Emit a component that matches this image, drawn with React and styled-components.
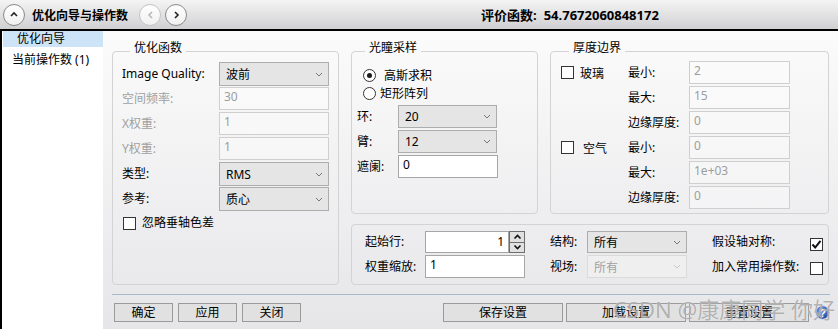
import React from 'react';
import styled, { createGlobalStyle } from 'styled-components';

const GlobalStyle = createGlobalStyle`
  html, body { margin: 0; padding: 0; }
  body {
    font-family: "Noto Sans", "Noto Sans CJK SC", sans-serif;
    font-size: 12px;
    color: #000;
    background: #fff;
  }
  * { box-sizing: border-box; }
`;

const Window = styled.div`
  position: relative;
  width: 838px;
  height: 329px;
  overflow: hidden;
  display: flex;
  flex-direction: column;
`;

const TitleBar = styled.div`
  flex: none;
  height: 31px;
  display: flex;
  align-items: center;
  padding-left: 3px;
  background: linear-gradient(#f4f4f4, #d0d0d3);
  border-bottom: 2px solid #000;
`;

const RoundButton = styled.div`
  width: 22px;
  height: 22px;
  border-radius: 50%;
  background: linear-gradient(#ffffff, #f0f0f0);
  border: 1px solid ${(p) => (p.$dim ? '#c4c4c4' : '#8a8a8a')};
  display: flex;
  align-items: center;
  justify-content: center;
  margin-left: ${(p) => p.$ml || 0}px;
  flex: none;
`;

const TitleText = styled.div`
  font-weight: bold;
  font-size: 12px;
  margin-left: 7px;
  margin-right: 11px;
  white-space: nowrap;
`;

const ScoreLabel = styled.div`
  font-weight: bold;
  font-size: 13px;
  margin-left: ${(p) => p.$ml || 0}px;
  white-space: nowrap;
`;

const Body = styled.div`
  flex: 1;
  display: flex;
  min-height: 0;
`;

const Sidebar = styled.div`
  flex: none;
  width: 103px;
  background: #fff;
  border-left: 2px solid #000;
`;

const NavItem = styled.div`
  height: 16px;
  line-height: 16px;
  margin-left: 1px;
  margin-top: ${(p) => p.$mt || 0}px;
  padding-left: ${(p) => p.$indent}px;
  background: ${(p) => (p.$selected ? '#cde4f8' : 'transparent')};
  white-space: nowrap;
`;

const Main = styled.div`
  flex: 1;
  display: flex;
  flex-direction: column;
  padding: 10px 8px 0 9px;
  background: linear-gradient(#fbfbfb, #e6e6e9);
`;

const Groups = styled.div`
  display: grid;
  grid-template-columns: 227px 187px 279px;
  grid-template-rows: 173px 61px;
  column-gap: 12px;
  row-gap: 10px;
`;

const Group = styled.fieldset`
  margin: 0;
  min-width: 0;
  border: 1px solid #d3d3d3;
  border-radius: 4px;
  padding: ${(p) => p.$pad};
  grid-column: ${(p) => p.$col};
  grid-row: ${(p) => p.$row};
`;

const Legend = styled.legend`
  margin-left: 8px;
  padding: 0 4px 6px;
  line-height: 14px;
  font-size: 12px;
`;

const FormRow = styled.div`
  display: grid;
  grid-template-columns: ${(p) => p.$cols};
  height: ${(p) => p.$h || 25}px;
  align-items: start;
`;

const Label = styled.div`
  line-height: ${(p) => p.$lh || 23}px;
  color: ${(p) => (p.$disabled ? '#a0a0a0' : '#000')};
  white-space: nowrap;
  grid-column: ${(p) => p.$col || 'auto'};
  grid-row: ${(p) => p.$row || 'auto'};
`;

const SelectBox = styled.div`
  width: ${(p) => p.$w}px;
  height: ${(p) => p.$h || 24}px;
  display: flex;
  align-items: center;
  justify-content: space-between;
  padding: 0 5px 0 6px;
  border: 1px solid ${(p) => (p.$disabled ? '#dadada' : '#adadad')};
  background: ${(p) => (p.$disabled ? '#efeff0' : '#e5e5e5')};
  color: ${(p) => (p.$disabled ? '#a0a0a0' : '#000')};
`;

const TextBox = styled.div`
  width: ${(p) => p.$w}px;
  height: ${(p) => p.$h || 23}px;
  padding: 1px 4px 0;
  line-height: 16px;
  text-align: ${(p) => (p.$right ? 'right' : 'left')};
  border: 1px solid ${(p) => (p.$disabled ? '#cfcfcf' : '#a6a6a6')};
  background: ${(p) => (p.$disabled ? 'rgba(255,255,255,0.35)' : '#fff')};
  color: ${(p) => (p.$disabled ? '#9d9d9d' : '#000')};
  grid-column: ${(p) => p.$col || 'auto'};
  grid-row: ${(p) => p.$row || 'auto'};
`;

const CheckRow = styled.div`
  display: flex;
  align-items: center;
  height: ${(p) => p.$h || 19}px;
  padding-left: ${(p) => p.$pl || 0}px;
  grid-column: ${(p) => p.$col || 'auto'};
  grid-row: ${(p) => p.$row || 'auto'};
  align-self: ${(p) => p.$self || 'auto'};
`;

const CheckBox = styled.span`
  flex: none;
  width: 13px;
  height: 13px;
  border: 1px solid #333;
  background: #fff;
  display: flex;
  align-items: center;
  justify-content: center;
  margin-top: ${(p) => p.$mt || 0}px;
`;

const Radio = styled.span`
  flex: none;
  width: 13px;
  height: 13px;
  border-radius: 50%;
  border: 1px solid #333;
  background: #fff;
  display: flex;
  align-items: center;
  justify-content: center;
  &::after {
    content: '';
    display: ${(p) => (p.$checked ? 'block' : 'none')};
    width: 5px;
    height: 5px;
    border-radius: 50%;
    background: #1a1a1a;
  }
`;

const OptionText = styled.span`
  margin-left: ${(p) => p.$gap}px;
  white-space: nowrap;
`;

const BoundsGrid = styled.div`
  display: grid;
  grid-template-columns: 67px 61px 101px;
  grid-template-rows: repeat(6, 25px);
  align-items: start;
`;

const BottomRow = styled.div`
  display: flex;
  gap: 25px;
`;

const FieldColumn = styled.div`
  display: grid;
  grid-template-columns: ${(p) => p.$cols};
  grid-template-rows: 24px 24px;
  align-items: start;
`;

const SpinWrap = styled.div`
  display: flex;
  width: 100px;
`;

const SpinButtons = styled.div`
  display: flex;
  flex-direction: column;
  width: 16px;
  height: 22px;
`;

const SpinBtn = styled.div`
  flex: 1;
  border: 1px solid #6e6e6e;
  background: #e1e1e1;
  display: flex;
  align-items: center;
  justify-content: center;
  & + & { border-top: none; }
`;

const Separator = styled.div`
  height: 1px;
  margin-top: 9px;
  background: #a6bccb;
`;

const ButtonRow = styled.div`
  display: flex;
  justify-content: space-between;
  align-items: center;
  margin-top: 8px;
  padding-left: 2px;
`;

const ButtonGroup = styled.div`
  display: flex;
  align-items: center;
  gap: ${(p) => p.$gap}px;
`;

const Button = styled.div`
  width: ${(p) => p.$w}px;
  height: 19px;
  line-height: 17px;
  text-align: center;
  border: 1px solid #9a9a9a;
  background: #e1e1e1;
  white-space: nowrap;
`;

const HelpIcon = styled.svg`
  margin-left: 3px;
  flex: none;
`;

const Watermark = styled.div`
  position: absolute;
  left: 613px;
  top: 296px;
  font-size: 22px;
  line-height: 26px;
  color: rgba(105, 105, 105, 0.5);
  text-shadow: 0 0 1px rgba(255, 255, 255, 0.9);
  white-space: nowrap;
  pointer-events: none;
`;

const Chevron = ({ color = '#777' }) => (
  <svg width="8" height="5" viewBox="0 0 8 5">
    <path d="M1 1 L4 4 L7 1" fill="none" stroke={color} strokeWidth="1" />
  </svg>
);

const Select = ({ w, h, disabled, children }) => (
  <SelectBox $w={w} $h={h} $disabled={disabled}>
    <span>{children}</span>
    <Chevron color={disabled ? '#c8c8c8' : '#777'} />
  </SelectBox>
);

const CheckMark = () => (
  <svg width="11" height="11" viewBox="0 0 11 11">
    <path d="M1.5 5.5 L4.2 8.5 L9.5 1.8" fill="none" stroke="#111" strokeWidth="2" />
  </svg>
);

export default function App() {
  return (
    <>
      <GlobalStyle />
      <Window>
        <TitleBar>
          <RoundButton>
            <svg width="10" height="7" viewBox="0 0 10 7">
              <path d="M2 5 L5 2 L8 5" fill="none" stroke="#222" strokeWidth="1.6" />
            </svg>
          </RoundButton>
          <TitleText>优化向导与操作数</TitleText>
          <RoundButton $dim>
            <svg width="7" height="10" viewBox="0 0 7 10">
              <path d="M5 2 L2 5 L5 8" fill="none" stroke="#b8b8b8" strokeWidth="1.6" />
            </svg>
          </RoundButton>
          <RoundButton $ml={4}>
            <svg width="7" height="10" viewBox="0 0 7 10">
              <path d="M2 2 L5 5 L2 8" fill="none" stroke="#222" strokeWidth="1.6" />
            </svg>
          </RoundButton>
          <ScoreLabel $ml={294}>评价函数:</ScoreLabel>
          <ScoreLabel $ml={7}>54.7672060848172</ScoreLabel>
        </TitleBar>
        <Body>
          <Sidebar>
            <NavItem $selected $indent={14}>优化向导</NavItem>
            <NavItem $indent={9} $mt={5}>当前操作数 (1)</NavItem>
          </Sidebar>
          <Main>
            <Groups>
              <Group $col="1" $row="1 / 3" $pad="1px 9px 0">
                <Legend>优化函数</Legend>
                <FormRow $cols="97px 110px">
                  <Label $lh={24}>Image Quality:</Label>
                  <Select w={110}>波前</Select>
                </FormRow>
                <FormRow $cols="97px 110px">
                  <Label $disabled>空间频率:</Label>
                  <TextBox $w={110} $disabled>30</TextBox>
                </FormRow>
                <FormRow $cols="97px 110px">
                  <Label $disabled>X权重:</Label>
                  <TextBox $w={110} $disabled>1</TextBox>
                </FormRow>
                <FormRow $cols="97px 110px">
                  <Label $disabled>Y权重:</Label>
                  <TextBox $w={110} $disabled>1</TextBox>
                </FormRow>
                <FormRow $cols="97px 110px">
                  <Label $lh={24}>类型:</Label>
                  <Select w={110}>RMS</Select>
                </FormRow>
                <FormRow $cols="97px 110px">
                  <Label $lh={24}>参考:</Label>
                  <Select w={110}>质心</Select>
                </FormRow>
                <CheckRow $h={19} $pl={1}>
                  <CheckBox $mt={3} />
                  <OptionText $gap={6}>忽略垂轴色差</OptionText>
                </CheckRow>
              </Group>

              <Group $col="2" $row="1" $pad="5px 5px 0">
                <Legend>光瞳采样</Legend>
                <CheckRow $h={18} $pl={6}>
                  <Radio $checked />
                  <OptionText $gap={8}>高斯求积</OptionText>
                </CheckRow>
                <CheckRow $h={18} $pl={6}>
                  <Radio />
                  <OptionText $gap={4}>矩形阵列</OptionText>
                </CheckRow>
                <FormRow $cols="41px 99px" style={{ marginTop: 3 }}>
                  <Label>环:</Label>
                  <Select w={99} h={23}>20</Select>
                </FormRow>
                <FormRow $cols="41px 99px">
                  <Label>臂:</Label>
                  <Select w={99} h={23}>12</Select>
                </FormRow>
                <FormRow $cols="41px 100px">
                  <Label>遮阑:</Label>
                  <TextBox $w={100}>0</TextBox>
                </FormRow>
              </Group>

              <Group $col="3" $row="1" $pad="0 10px 0">
                <Legend>厚度边界</Legend>
                <BoundsGrid>
                  <CheckRow $col="1" $row="1" $h={23}>
                    <CheckBox />
                    <OptionText $gap={6}>玻璃</OptionText>
                  </CheckRow>
                  <Label $col="2" $row="1">最小:</Label>
                  <TextBox $col="3" $row="1" $w={101} $disabled>2</TextBox>
                  <Label $col="2" $row="2">最大:</Label>
                  <TextBox $col="3" $row="2" $w={101} $disabled>15</TextBox>
                  <Label $col="2" $row="3">边缘厚度:</Label>
                  <TextBox $col="3" $row="3" $w={101} $disabled>0</TextBox>
                  <CheckRow $col="1" $row="4" $h={23}>
                    <CheckBox />
                    <OptionText $gap={9}>空气</OptionText>
                  </CheckRow>
                  <Label $col="2" $row="4">最小:</Label>
                  <TextBox $col="3" $row="4" $w={101} $disabled>0</TextBox>
                  <Label $col="2" $row="5">最大:</Label>
                  <TextBox $col="3" $row="5" $w={101} $disabled>1e+03</TextBox>
                  <Label $col="2" $row="6">边缘厚度:</Label>
                  <TextBox $col="3" $row="6" $w={101} $disabled>0</TextBox>
                </BoundsGrid>
              </Group>

              <Group $col="2 / 4" $row="2" $pad="6px 13px 0">
                <BottomRow>
                  <FieldColumn $cols="60px 100px">
                    <Label $lh={22}>起始行:</Label>
                    <SpinWrap>
                      <TextBox $w={84} $h={22} $right style={{ paddingTop: 2 }}>1</TextBox>
                      <SpinButtons>
                        <SpinBtn>
                          <svg width="9" height="6" viewBox="0 0 9 6">
                            <path d="M1.5 4.5 L4.5 1.5 L7.5 4.5" fill="none" stroke="#111" strokeWidth="1.6" />
                          </svg>
                        </SpinBtn>
                        <SpinBtn>
                          <svg width="9" height="6" viewBox="0 0 9 6">
                            <path d="M1.5 1.5 L4.5 4.5 L7.5 1.5" fill="none" stroke="#111" strokeWidth="1.6" />
                          </svg>
                        </SpinBtn>
                      </SpinButtons>
                    </SpinWrap>
                    <Label $lh={23}>权重缩放:</Label>
                    <TextBox $w={100} $h={23}>1</TextBox>
                  </FieldColumn>
                  <FieldColumn $cols="37px 100px">
                    <Label $lh={22}>结构:</Label>
                    <Select w={100} h={22}>所有</Select>
                    <Label $lh={23}>视场:</Label>
                    <Select w={100} h={23} disabled>所有</Select>
                  </FieldColumn>
                  <FieldColumn $cols="98px 13px">
                    <Label $lh={22}>假设轴对称:</Label>
                    <CheckRow $h={22}>
                      <CheckBox $mt={4}><CheckMark /></CheckBox>
                    </CheckRow>
                    <Label $lh={23}>加入常用操作数:</Label>
                    <CheckRow $h={23}>
                      <CheckBox $mt={3} />
                    </CheckRow>
                  </FieldColumn>
                </BottomRow>
              </Group>
            </Groups>
            <Separator />
            <ButtonRow>
              <ButtonGroup $gap={5}>
                <Button $w={59}>确定</Button>
                <Button $w={59}>应用</Button>
                <Button $w={59}>关闭</Button>
              </ButtonGroup>
              <ButtonGroup $gap={3}>
                <Button $w={120}>保存设置</Button>
                <Button $w={120}>加载设置</Button>
                <Button $w={120}>重置设置</Button>
                <HelpIcon width="15" height="15" viewBox="0 0 15 15">
                  <defs>
                    <radialGradient id="hg" cx="0.4" cy="0.35" r="0.7">
                      <stop offset="0" stopColor="#6f9be6" />
                      <stop offset="1" stopColor="#1c3f9a" />
                    </radialGradient>
                  </defs>
                  <circle cx="7.5" cy="7.5" r="6.8" fill="url(#hg)" stroke="#c9d4e8" strokeWidth="1" />
                  <text x="7.5" y="11.5" textAnchor="middle" fontSize="11" fontWeight="bold" fill="#fff" fontFamily="Liberation Sans, sans-serif">?</text>
                </HelpIcon>
              </ButtonGroup>
            </ButtonRow>
          </Main>
        </Body>
        <Watermark>CSDN @康康同学 你好</Watermark>
      </Window>
    </>
  );
}
